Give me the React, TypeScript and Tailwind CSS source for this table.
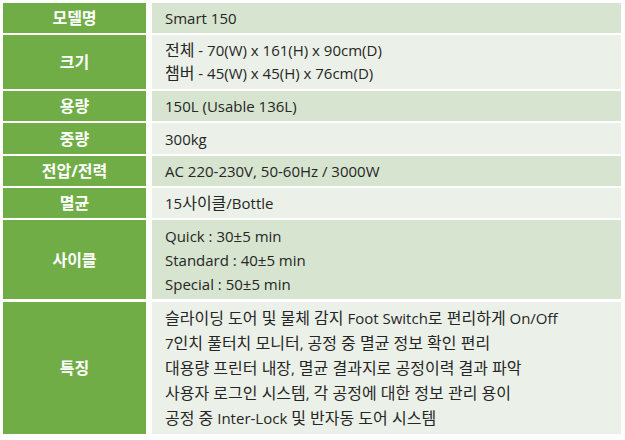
import React from "react"

type Row = {
  label: string
  lines: string[]
  height: string
  tone: "dark" | "light"
  leading?: string
}

const rows: Row[] = [
  { label: "모델명", lines: ["Smart 150"], height: "h-[30px]", tone: "dark" },
  {
    label: "크기",
    lines: ["전체 - 70(W) x 161(H) x 90cm(D)", "챔버 - 45(W) x 45(H) x 76cm(D)"],
    height: "h-[54px]",
    tone: "light",
    leading: "leading-[23px]",
  },
  { label: "용량", lines: ["150L (Usable 136L)"], height: "h-[30px]", tone: "dark" },
  { label: "중량", lines: ["300kg"], height: "h-[31px]", tone: "light" },
  { label: "전압/전력", lines: ["AC 220-230V, 50-60Hz / 3000W"], height: "h-[30px]", tone: "dark" },
  { label: "멸균", lines: ["15사이클/Bottle"], height: "h-[30px]", tone: "light" },
  {
    label: "사이클",
    lines: ["Quick : 30±5 min", "Standard : 40±5 min", "Special : 50±5 min"],
    height: "h-[79px]",
    tone: "dark",
    leading: "leading-[24px]",
  },
  {
    label: "특징",
    lines: [
      "슬라이딩 도어 및 물체 감지 Foot Switch로 편리하게 On/Off",
      "7인치 풀터치 모니터, 공정 중 멸균 정보 확인 편리",
      "대용량 프린터 내장, 멸균 결과지로 공정이력 결과 파악",
      "사용자 로그인 시스템, 각 공정에 대한 정보 관리 용이",
      "공정 중 Inter-Lock 및 반자동 도어 시스템",
    ],
    height: "h-[132px]",
    tone: "light",
    leading: "leading-[25px]",
  },
]

// hangul runs render a touch larger, like Malgun Gothic next to Segoe
function Mixed({ text }: { text: string }) {
  const parts = text.split(/([가-힣]+(?: [가-힣]+)*)/)
  return (
    <>
      {parts.map((p, i) =>
        /[가-힣]/.test(p) ? (
          <span key={i} className="text-[16px]">
            {p}
          </span>
        ) : (
          <React.Fragment key={i}>{p}</React.Fragment>
        )
      )}
    </>
  )
}

export default function App() {
  return (
    <div
      className="w-[625px] h-[440px] bg-white pt-[3px] pl-[3px]"
      style={{ fontFamily: '"Open Sans", "Noto Sans CJK KR", sans-serif' }}
    >
      <div className="flex w-[618px] flex-col gap-[2px]">
        {rows.map((row, i) => (
          <div key={row.label} className={`flex gap-[6px] ${row.height} ${i === rows.length - 1 ? "mt-[1px]" : ""}`}>
            <div className="flex w-[143px] shrink-0 items-center justify-center bg-[#70ad47] text-[16px] font-bold text-white">
              {row.label}
            </div>
            <div
              className={`flex flex-1 flex-col justify-center whitespace-nowrap pl-[13px] text-[15px] text-[#262626] ${
                row.leading ?? "leading-[20px]"
              } ${row.tone === "dark" ? "bg-[#d7e4cf]" : "bg-[#ebf1e8]"}`}
            >
              {row.lines.map((line) => (
                <div key={line}>
                  <Mixed text={line} />
                </div>
              ))}
            </div>
          </div>
        ))}
      </div>
    </div>
  )
}
